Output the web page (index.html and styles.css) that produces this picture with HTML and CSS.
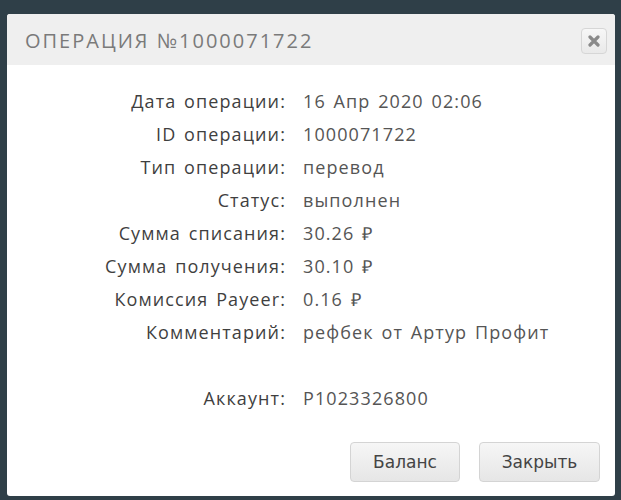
FILE: index.html
```html
<!DOCTYPE html>
<html lang="ru">
<head>
<meta charset="utf-8">
<title>Операция</title>
<link rel="stylesheet" href="styles.css">
</head>
<body>
<div class="overlay">
  <div class="dialog">
    <div class="dialog-head">
      <div class="dialog-title">ОПЕРАЦИЯ №1000071722</div>
      <button class="close-btn" aria-label="Закрыть">
        <svg width="12" height="12" viewBox="0 0 12 12"><path d="M2 2 L10 10 M10 2 L2 10" stroke="#8a8a8a" stroke-width="3.2" stroke-linecap="round"/></svg>
      </button>
    </div>
    <div class="dialog-body">
      <div class="info">
        <div class="lbl">Дата операции:</div><div class="val">16 Апр 2020 02:06</div>
        <div class="lbl">ID операции:</div><div class="val">1000071722</div>
        <div class="lbl">Тип операции:</div><div class="val">перевод</div>
        <div class="lbl">Статус:</div><div class="val">выполнен</div>
        <div class="lbl">Сумма списания:</div><div class="val">30.26 ₽</div>
        <div class="lbl">Сумма получения:</div><div class="val">30.10 ₽</div>
        <div class="lbl">Комиссия Payeer:</div><div class="val">0.16 ₽</div>
        <div class="lbl">Комментарий:</div><div class="val">рефбек от Артур Профит</div>
        <div class="lbl"></div><div class="val"></div>
        <div class="lbl">Аккаунт:</div><div class="val">P1023326800</div>
      </div>
    </div>
    <div class="dialog-foot">
      <button class="btn">Баланс</button>
      <button class="btn">Закрыть</button>
    </div>
  </div>
</div>
</body>
</html>
```
FILE: styles.css
```css
html, body {
  margin: 0;
  padding: 0;
  height: 100%;
}
body {
  background: #2f3f48;
}
.overlay {
  padding: 14px 6px 4px 7px;
}
.dialog {
  width: 608px;
  height: 482px;
  background: #fff;
  border-radius: 3px;
  display: flex;
  flex-direction: column;
  overflow: hidden;
}
.dialog-head {
  height: 51px;
  background: #efefef;
  display: flex;
  align-items: center;
  justify-content: space-between;
  padding: 0 8px 0 18px;
  flex: none;
}
.dialog-title {
  font-family: "Open Sans", sans-serif;
  font-size: 20px;
  letter-spacing: 2px;
  color: #7a7a7a;
  margin-top: 2px;
}
.close-btn {
  width: 26px;
  height: 26px;
  padding: 0;
  border: 1px solid #d6d6d6;
  border-radius: 4px;
  background: linear-gradient(#f7f7f7, #e9e9e9);
  display: flex;
  align-items: center;
  justify-content: center;
  margin-top: 3px;
}
.dialog-body {
  flex: 1;
  padding-top: 19px;
}
.info {
  display: grid;
  grid-template-columns: 279px 1fr;
  column-gap: 17px;
  grid-auto-rows: 33px;
  font-family: "Open Sans", sans-serif;
  font-size: 18px;
  letter-spacing: 1.1px;
  word-spacing: 2px;
  color: #3f3f3f;
  align-items: center;
}
.lbl {
  text-align: right;
}
.val {
  color: #555;
}
.dialog-foot {
  display: flex;
  justify-content: flex-end;
  gap: 19px;
  padding: 0 15px 14px 0;
}
.btn {
  height: 40px;
  font-family: "DejaVu Sans", sans-serif;
  font-size: 17px;
  color: #444;
  border: 1px solid #d4d4d4;
  border-radius: 4px;
  background: linear-gradient(#f6f6f6, #e6e6e6);
  padding: 0 20px;
}
.btn:first-child { width: 110px; }
.btn:last-child { width: 121px; }
```
